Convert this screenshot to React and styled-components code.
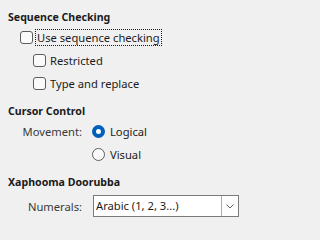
import React from "react"
import styled, { createGlobalStyle } from "styled-components"

const GlobalStyle = createGlobalStyle`
  html, body {
    margin: 0;
    padding: 0;
    background: #f0f0f0;
  }
  body {
    font-family: "Noto Sans", "Open Sans", sans-serif;
    font-size: 11.2px;
    color: #1b1b1b;
  }
`

const Page = styled.div`
  width: 247px;
  height: 227px;
  box-sizing: border-box;
  padding: 9px 8px 0 8px;
  display: flex;
  flex-direction: column;
`

const Section = styled.section`
  display: flex;
  flex-direction: column;
  & + & {
    margin-top: 8px;
  }
`

const Heading = styled.div`
  height: 16px;
  line-height: 16px;
  font-size: 10.6px;
  font-weight: 700;
  margin-bottom: ${(p) => p.$gap || 1}px;
`

const CheckRow = styled.label`
  height: 23px;
  display: flex;
  align-items: center;
  padding-left: ${(p) => p.$indent}px;
`

const Box = styled.span`
  width: 13px;
  height: 13px;
  box-sizing: border-box;
  border: 1px solid #5d5d5d;
  border-radius: 3px;
  background: #fafafa;
  flex: none;
`

const Caption = styled.span`
  margin-left: ${(p) => (p.$focus ? 2 : 4)}px;
  line-height: 15px;
  padding: 0 ${(p) => (p.$focus ? 1 : 0)}px;
  border: ${(p) => (p.$focus ? "1px dotted #1b1b1b" : "none")};
  white-space: nowrap;
`

const FieldGrid = styled.div`
  display: grid;
  grid-template-columns: 74px 1fr;
  column-gap: ${(p) => p.$gap}px;
  align-items: center;
`

const FieldLabel = styled.span`
  text-align: right;
  color: #3a3a3a;
  white-space: nowrap;
`

const RadioRow = styled.label`
  grid-column: 2;
  height: 23px;
  display: flex;
  align-items: center;
`

const Dot = styled.span`
  width: 13px;
  height: 13px;
  box-sizing: border-box;
  border-radius: 50%;
  flex: none;
  border: ${(p) => (p.$on ? "4px solid #005fb8" : "1px solid #5d5d5d")};
  background: ${(p) => (p.$on ? "#ffffff" : "#fafafa")};
`

const RadioText = styled.span`
  margin-left: 5px;
`

const Select = styled.div`
  width: 146px;
  height: 22px;
  box-sizing: border-box;
  border: 1px solid #7a7a7a;
  background: #ffffff;
  display: flex;
  align-items: stretch;
`

const SelectValue = styled.span`
  flex: 1;
  padding-left: 2px;
  line-height: 20px;
  white-space: nowrap;
`

const SelectButton = styled.span`
  width: 16px;
  border-left: 1px solid #adadad;
  display: flex;
  align-items: center;
  justify-content: center;
  background: #fdfdfd;
`

const Chevron = () => (
  <svg width="8" height="5" viewBox="0 0 8 5">
    <path d="M0.5 0.5 L4 4 L7.5 0.5" fill="none" stroke="#606060" strokeWidth="1" />
  </svg>
)

const App = () => {
  return (
    <>
      <GlobalStyle />
      <Page>
        <Section>
          <Heading>Sequence Checking</Heading>
          <CheckRow $indent={12}>
            <Box />
            <Caption $focus>Use sequence checking</Caption>
          </CheckRow>
          <CheckRow $indent={25}>
            <Box />
            <Caption>Restricted</Caption>
          </CheckRow>
          <CheckRow $indent={25}>
            <Box />
            <Caption>Type and replace</Caption>
          </CheckRow>
        </Section>

        <Section>
          <Heading>Cursor Control</Heading>
          <FieldGrid $gap={10}>
            <FieldLabel>Movement:</FieldLabel>
            <RadioRow>
              <Dot $on />
              <RadioText>Logical</RadioText>
            </RadioRow>
            <RadioRow>
              <Dot />
              <RadioText>Visual</RadioText>
            </RadioRow>
          </FieldGrid>
        </Section>

        <Section>
          <Heading $gap={5}>Xaphooma Doorubba</Heading>
          <FieldGrid $gap={11}>
            <FieldLabel>Numerals:</FieldLabel>
            <Select>
              <SelectValue>Arabic (1, 2, 3...)</SelectValue>
              <SelectButton>
                <Chevron />
              </SelectButton>
            </Select>
          </FieldGrid>
        </Section>
      </Page>
    </>
  )
}

export default App
